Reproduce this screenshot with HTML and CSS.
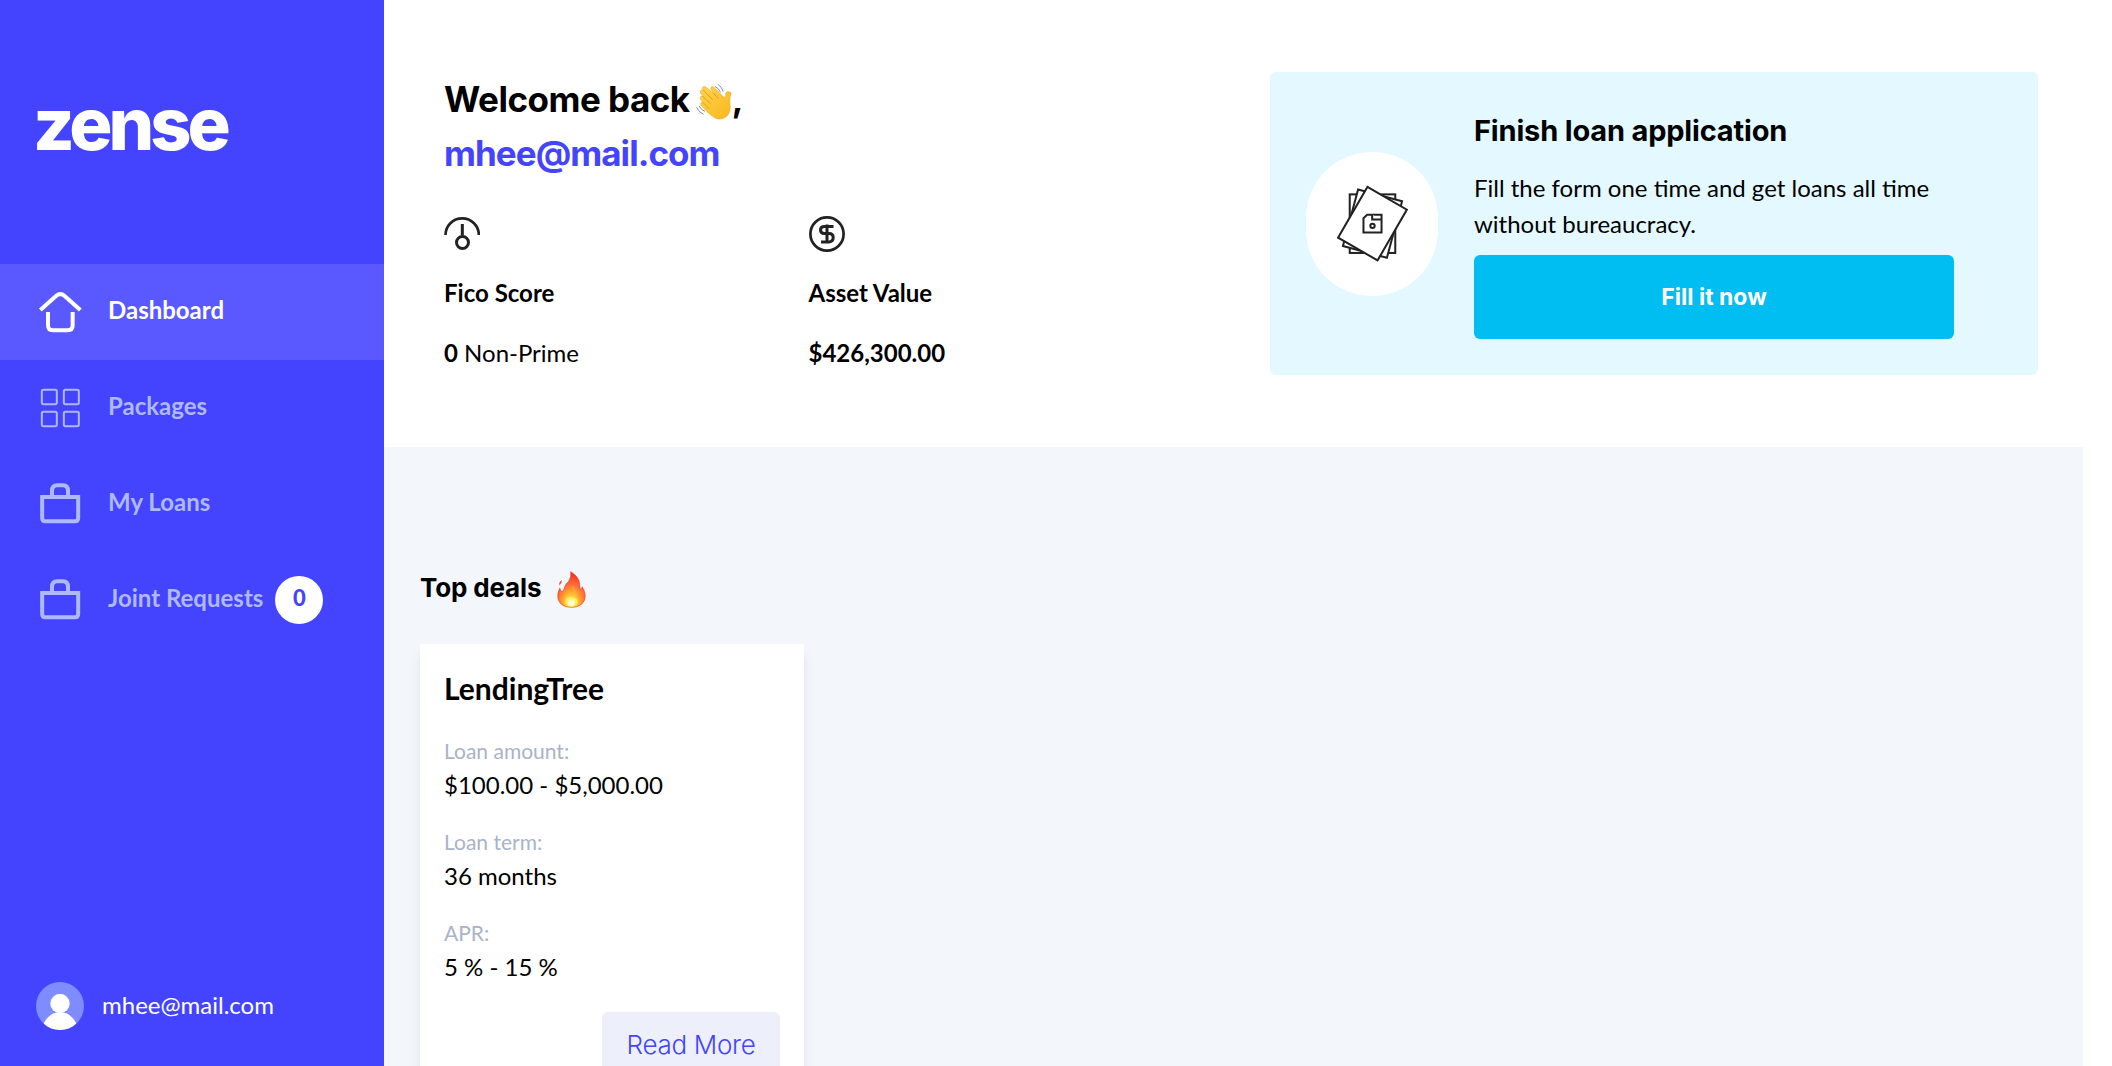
FILE: index.html
```html
<!DOCTYPE html>
<html lang="en">
<head>
<meta charset="utf-8">
<title>Zense – Dashboard</title>
<link rel="stylesheet" href="styles.css">
</head>
<body>
<svg class="defs" width="0" height="0" aria-hidden="true">
  <symbol id="bag" viewBox="0 0 144 144">
    <g fill="none" stroke="currentColor" stroke-width="12">
      <path d="M18.500 51H126.500V114Q126.500 124 117 124H28Q18.500 124 18.500 114Z"/>
      <path d="M48 54V33Q48 16 63 16H81Q96 16 96 33V54"/>
    </g>
  </symbol>
</svg>
<div class="app">
  <aside class="sidebar">
    <div class="logo">zense</div>
    <nav class="nav">
      <a class="nav-item active">
        <svg class="nav-icon" viewBox="108 684 144 144"><g fill="none" stroke="currentColor" stroke-width="12"><path d="M121 750L168 708Q181 697 194 708L241 750"/><path d="M144 756V796Q144 811 159 811H203Q218 811 218 796V756"/></g></svg>
        <span>Dashboard</span>
      </a>
      <a class="nav-item">
        <svg class="nav-icon" viewBox="108 72 144 144"><g fill="none" stroke="currentColor" stroke-width="6"><rect x="125.500" y="89.500" width="45" height="43" rx="5"/><rect x="191.500" y="89.500" width="45" height="43" rx="5"/><rect x="125.500" y="155.500" width="45" height="43" rx="5"/><rect x="191.500" y="155.500" width="45" height="43" rx="5"/></g></svg>
        <span>Packages</span>
      </a>
      <a class="nav-item">
        <svg class="nav-icon"><use href="#bag"/></svg>
        <span>My Loans</span>
      </a>
      <a class="nav-item">
        <svg class="nav-icon"><use href="#bag"/></svg>
        <span>Joint Requests</span>
        <b class="badge">0</b>
      </a>
    </nav>
    <div class="user">
      <svg class="avatar" viewBox="0 0 48 48"><defs><clipPath id="av"><circle cx="24" cy="24" r="24"/></clipPath></defs><g clip-path="url(#av)"><rect width="48" height="48" fill="#7f8cff"/><circle cx="24" cy="21.500" r="9.700" fill="#fff"/><path d="M5 48Q11 30 24 30T43 48Z" fill="#fff"/></g></svg>
      <span>mhee@mail.com</span>
    </div>
  </aside>

  <main class="main">
    <section class="hero">
      <div class="summary">
        <h1 class="welcome"><span>Welcome back</span>
          <svg class="wave" viewBox="828 66 112 114">
            <defs><linearGradient id="hand" x1="0" y1="0" x2="1" y2="1"><stop offset="0" stop-color="#ffd54a"/><stop offset="1" stop-color="#f9b51e"/></linearGradient></defs>
            <path fill="url(#hand)" stroke="#e8a024" stroke-width="1.500" d="M869 160L846 136Q843 128 849 127Q851 126 854 129L844 117Q842 109 849 108L853 110L844 98Q842 90 850 89L855 91L850 85Q851 77 860 80L886 102L875 86Q876 77 884 80L914 110Q920 114 921 108L921 99Q926 92 934 96Q940 98 936 105Q932 113 934 135Q937 157 923 170Q904 184 886 173Z"/>
            <path fill="none" stroke="#df941f" stroke-width="2.500" stroke-linecap="round" d="M854 91L881 119M852 109L875 132M853 128L870 146M885 101L898 115"/>
            <path fill="none" stroke="#777" stroke-width="2.500" stroke-linecap="round" d="M898 73Q910 80 913 94M889 79Q900 84 905 96M833 143Q840 158 853 163M841 139Q847 151 857 154"/>
          </svg><span>,</span></h1>
        <div class="email">mhee@mail.com</div>
        <div class="stats">
          <div class="stat">
            <svg class="stat-icon" viewBox="72 468 108 108"><g fill="none" stroke="#222" stroke-width="8"><path d="M76.500 525A50 50 0 0 1 176.500 525"/><path d="M127 492V526" stroke-width="9"/><circle cx="127.500" cy="547.500" r="18" stroke-width="9"/></g></svg>
            <div class="stat-label">Fico Score</div>
            <div class="stat-value"><b>0</b> Non-Prime</div>
          </div>
          <div class="stat">
            <svg class="stat-icon" viewBox="0 0 36 36"><g fill="none" stroke="#222" stroke-width="2.700"><circle cx="18" cy="18" r="16.600"/><path d="M24.500 10.500H15.500Q11.500 10.500 11.500 14T15.500 17.500H20Q24.200 17.500 24.200 21.500T20 26H12M18 8.500V27.500" stroke-width="3"/></g></svg>
            <div class="stat-label">Asset Value</div>
            <div class="stat-value"><b>$426,300.00</b></div>
          </div>
        </div>
      </div>

      <div class="promo">
        <div class="promo-icon">
          <svg class="papers" viewBox="230 376 212 230"><g fill="#fff" stroke="#222" stroke-width="6"><rect x="268" y="404" width="136" height="175"/><rect x="268" y="404" width="136" height="175" transform="rotate(15 336 491.500)"/><rect x="268" y="404" width="136" height="175" transform="rotate(30 336 491.500)"/><path d="M309 475L320 465H363V518H309Z"/><path d="M335 465V479H363"/><circle cx="336" cy="498" r="6.500"/></g></svg>
        </div>
        <div class="promo-body">
          <h2 class="promo-title">Finish loan application</h2>
          <p class="promo-text">Fill the form one time and get loans all time without bureaucracy.</p>
          <button class="promo-button">Fill it now</button>
        </div>
      </div>
    </section>

    <section class="deals">
      <h3 class="deals-title"><span>Top deals</span>
        <svg class="fire" viewBox="468 94 90 112">
          <defs><radialGradient id="flame" cx=".5" cy=".86" r=".85"><stop offset="0" stop-color="#fffde0"/><stop offset=".15" stop-color="#fff04a"/><stop offset=".34" stop-color="#ffac2e"/><stop offset=".58" stop-color="#ff7038"/><stop offset="1" stop-color="#f2281c"/></radialGradient></defs>
          <path fill="url(#flame)" stroke="#f03a20" stroke-width="2" d="M512 96Q538 112 539 134Q539 144 542 150Q546 151 547 142Q561 164 553 184Q543 204 514 204Q483 204 474 180Q470 162 479 146Q480 153 486 157Q492 153 494 142Q497 133 506 125Q515 113 512 96Z"/>
          <path fill="#f6502c" d="M485 121Q487 129 478 137Q475 128 485 121Z"/>
          <path fill="#ffb53a" opacity=".5" d="M518 136Q534 160 530 178Q525 198 512 201Q492 199 492 178Q497 181 501 176Q505 166 515 160Q521 151 518 136Z"/>
          <ellipse cx="514" cy="187" rx="19" ry="15" fill="#fff85a" opacity=".8"/><ellipse cx="514" cy="190" rx="11" ry="10" fill="#fffde0" opacity=".9"/>
        </svg>
      </h3>
      <article class="deal">
        <h4 class="deal-title">LendingTree</h4>
        <dl class="facts">
          <div class="fact"><dt>Loan amount:</dt><dd>$100.00 - $5,000.00</dd></div>
          <div class="fact"><dt>Loan term:</dt><dd>36 months</dd></div>
          <div class="fact"><dt>APR:</dt><dd>5 % - 15 %</dd></div>
        </dl>
        <button class="deal-button">Read More</button>
      </article>
    </section>
  </main>
</div>
</body>
</html>
```
FILE: styles.css
```css
*{box-sizing:border-box;margin:0;padding:0}
html,body{height:100%;overflow:hidden}
body{background:#fff;color:#000;font:400 24px/36px Lato,sans-serif}
button{border:0;border-radius:6px;font-family:Inter,sans-serif}
svg{display:block;flex:none}
.defs{position:absolute}
.app{display:flex;height:100vh;padding-right:29px}

.sidebar{width:384px;flex:none;display:flex;flex-direction:column;background:#4444ff;color:#aeb9ff}
.logo{height:264px;padding:88px 0 0 33px;font:800 72px/72px Inter,sans-serif;letter-spacing:-4px;color:#fff}
.nav-item{display:flex;align-items:center;height:96px;padding-left:36px;font-weight:700}
.nav-item.active{background:#5959ff;color:#fff}
.nav-icon{width:48px;height:48px;margin-right:24px}
.nav-item span{padding-bottom:4px}
.badge{width:48px;height:48px;margin-left:12px;border-radius:50%;background:#fff;color:#4444ff;text-align:center;font-size:22px;line-height:44px}
.user{display:flex;align-items:center;gap:18px;margin:auto 0 36px 36px;color:#fff}
.user span{padding-bottom:2px}
.avatar{width:48px;height:48px}

.main{flex:1;display:flex;flex-direction:column;background:#f3f6fb}
.hero{display:flex;justify-content:space-between;height:447px;padding:72px 45px 72px 60px;background:#fff}
.welcome,.email{font:700 35px/54px Inter,sans-serif;letter-spacing:-.5px}
.welcome{display:flex;align-items:center}
.wave{width:37px;height:38px;margin:4px 0 0 5px}
.email{color:#4444ff;letter-spacing:-.95px}
.stats{display:flex;margin-top:36px}
.stat{width:364.5px}
.stat-icon{width:36px;height:36px}
.stat-label{margin-top:23px;font-weight:700}
.stat-value{margin-top:24px}
.promo{width:768px;height:303px;display:flex;gap:36px;align-items:center;padding:36px;border-radius:6px;background:#e3f9ff}
.promo-icon{width:132px;height:144px;flex:none;display:flex;align-items:center;justify-content:center;border-radius:72px;background:#fff}
.papers{width:71px;height:77px}
.promo-body{width:480px}
.promo-title{font:700 29px/45px Inter,sans-serif;letter-spacing:-.18px;white-space:nowrap}
.promo-text{margin-top:17px}
.promo-button{display:block;width:480px;height:84px;margin-top:13px;background:#00bdf2;color:#fff;font-size:23px;font-weight:700}

.deals{padding:122px 36px 0}
.deals-title{display:flex;align-items:flex-start;gap:15px;height:75px;font:700 26px/37px Inter,sans-serif;letter-spacing:-.15px}
.fire{width:30px;height:37px;margin-top:2px}
.deal{display:flex;flex-direction:column;width:384px;padding:22px 24px 24px;background:#fff;box-shadow:0 10px 15px -3px rgba(0,0,0,.1),0 4px 6px -2px rgba(0,0,0,.05)}
.deal-title{font-size:30px;line-height:44px;font-weight:700}
.facts{display:flex;flex-direction:column;gap:23px;margin-top:25px}
.fact dt{font-size:21px;line-height:32px;color:#aab3c8}
.deal-button{align-self:flex-end;width:178px;height:65px;margin-top:27px;background:#edf0fa;color:#4444ff;font-size:26px;font-weight:300;letter-spacing:-.3px}
```
